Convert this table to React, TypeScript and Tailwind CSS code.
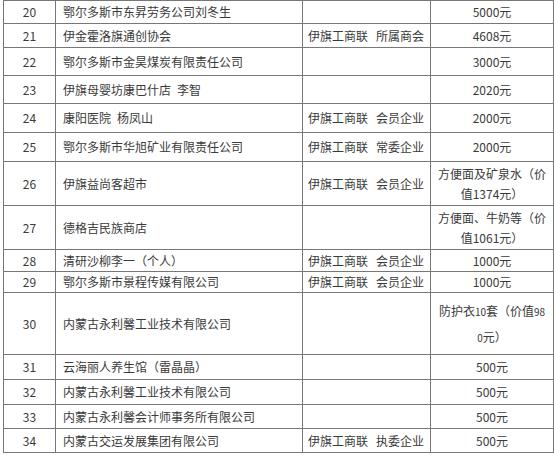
type Row = {
  no: string;
  name: React.ReactNode;
  org?: string;
  amount: React.ReactNode;
  h: number;
};

const rows: Row[] = [
  { no: "20", name: "鄂尔多斯市东昇劳务公司刘冬生", amount: "5000元", h: 23 },
  { no: "21", name: "伊金霍洛旗通创协会", org: "所属商会", amount: "4608元", h: 24 },
  { no: "22", name: "鄂尔多斯市金昊煤炭有限责任公司", amount: "3000元", h: 28 },
  {
    no: "23",
    name: (
      <>
        伊旗母婴坊康巴什店<span className="ml-[6px]">李智</span>
      </>
    ),
    amount: "2020元",
    h: 28,
  },
  {
    no: "24",
    name: (
      <>
        康阳医院<span className="ml-[6px]">杨凤山</span>
      </>
    ),
    org: "会员企业",
    amount: "2000元",
    h: 29,
  },
  { no: "25", name: "鄂尔多斯市华旭矿业有限责任公司", org: "常委企业", amount: "2000元", h: 29 },
  {
    no: "26",
    name: "伊旗益尚客超市",
    org: "会员企业",
    amount: (
      <span className="block leading-[20px]">
        方便面及矿泉水（价
        <br />
        值1374元）
      </span>
    ),
    h: 44,
  },
  {
    no: "27",
    name: "德格吉民族商店",
    amount: (
      <span className="block leading-[20px]">
        方便面、牛奶等（价
        <br />
        值1061元）
      </span>
    ),
    h: 44,
  },
  { no: "28", name: "清研沙柳李一（个人）", org: "会员企业", amount: "1000元", h: 22 },
  { no: "29", name: "鄂尔多斯市景程传媒有限公司", org: "会员企业", amount: "1000元", h: 21 },
  {
    no: "30",
    name: "内蒙古永利馨工业技术有限公司",
    amount: (
      <span className="block leading-[25px]">
        防护衣<span className="text-[10px]">10</span>套（价值<span className="text-[10px]">98</span>
        <br />
        <span className="text-[10px]">0</span>元）
      </span>
    ),
    h: 62,
  },
  { no: "31", name: "云海丽人养生馆（雷晶晶）", amount: "500元", h: 25 },
  { no: "32", name: "内蒙古永利馨工业技术有限公司", amount: "500元", h: 25 },
  { no: "33", name: "内蒙古永利馨会计师事务所有限公司", amount: "500元", h: 24 },
  { no: "34", name: "内蒙古交运发展集团有限公司", org: "执委企业", amount: "500元", h: 24 },
];

export default function App() {
  return (
    <div
      className="w-[554px] h-[455px] bg-white overflow-hidden text-[12px] text-[#3a3a3a]"
      style={{ fontFamily: '"Noto Sans CJK SC", "Noto Sans", sans-serif' }}
    >
      <table className="ml-[3px] w-[550px] table-fixed border-collapse">
        <colgroup>
          <col className="w-[52px]" />
          <col className="w-[247px]" />
          <col className="w-[128px]" />
          <col className="w-[123px]" />
        </colgroup>
        <tbody>
          {rows.map((r) => (
            <tr key={r.no} style={{ height: r.h }}>
              <td className="border border-[#777] text-center align-middle p-0">{r.no}</td>
              <td className="border border-[#777] align-middle pl-[7px] pr-1 py-0 whitespace-nowrap">
                {r.name}
              </td>
              <td className="border border-[#777] align-middle pl-[5px] py-0 whitespace-nowrap">
                {r.org && (
                  <>
                    伊旗工商联<span className="ml-[8px]">{r.org}</span>
                  </>
                )}
              </td>
              <td className="border border-[#777] text-center align-middle p-0 whitespace-nowrap">
                {r.amount}
              </td>
            </tr>
          ))}
        </tbody>
      </table>
    </div>
  );
}
